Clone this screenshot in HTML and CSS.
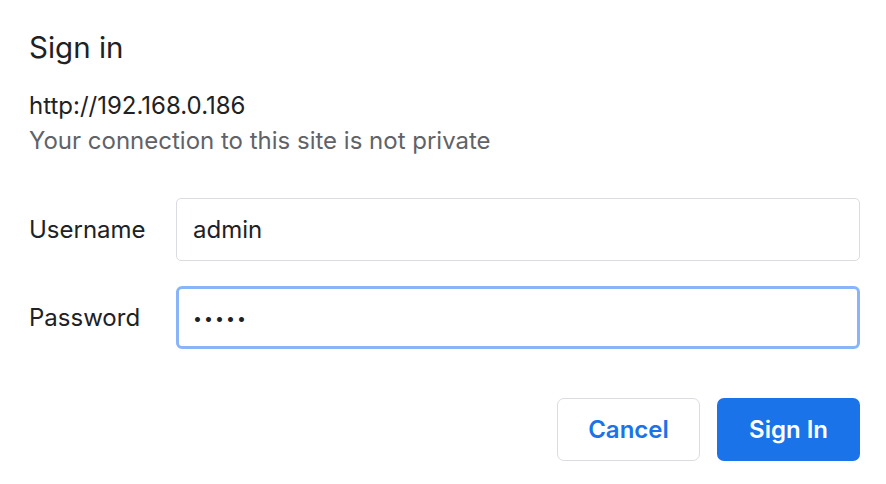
FILE: index.html
```html
<!DOCTYPE html>
<html lang="en">
<head>
  <meta charset="UTF-8">
  <title>Sign in</title>
  <link rel="stylesheet" href="styles.css">
</head>
<body>
  <div class="dialog">
    <h1>Sign in</h1>
    <p class="origin">http://192.168.0.186</p>
    <p class="note">Your connection to this site is not private</p>
    <form class="fields" action="">
      <label for="username">Username</label>
      <input type="text" id="username" value="admin">
      <label for="password">Password</label>
      <input type="password" id="password" class="focused" value="admin">
    </form>
    <div class="actions">
      <button class="btn cancel">Cancel</button>
      <button class="btn primary">Sign In</button>
    </div>
  </div>
</body>
</html>
```

FILE: styles.css
```css
* {
  margin: 0;
  padding: 0;
  box-sizing: border-box;
}
body {
  background: #fff;
  font-family: Inter, "Noto Sans", sans-serif;
  color: #202124;
}
.dialog {
  padding: 29px 26px 0 29px;
}
h1 {
  font-size: 29.5px;
  font-weight: 400;
  line-height: 36px;
}
.origin {
  margin-top: 25px;
  font-size: 24px;
  line-height: 32px;
}
.note {
  margin-top: 3px;
  font-size: 24px;
  line-height: 32px;
  color: #5f6368;
}
.fields {
  display: grid;
  grid-template-columns: 147px 1fr;
  row-gap: 25px;
  align-items: center;
  margin-top: 41px;
}
.fields label {
  font-size: 24px;
}
.fields input {
  height: 63px;
  border: 1px solid #dadce0;
  border-radius: 5px;
  padding: 0 16px;
  font-family: inherit;
  font-size: 24px;
  color: #202124;
  outline: none;
}
.fields input.focused {
  border: 3px solid #8ab4f8;
  padding: 0 14px;
  border-radius: 6px;
  font-size: 16px;
  letter-spacing: 2px;
}
.actions {
  display: flex;
  justify-content: flex-end;
  gap: 17px;
  margin-top: 49px;
}
.btn {
  width: 143px;
  height: 63px;
  border-radius: 7px;
  font-family: inherit;
  font-size: 24px;
  font-weight: 600;
  cursor: pointer;
}
.cancel {
  background: #fff;
  color: #1a73e8;
  border: 1px solid #dadce0;
}
.primary {
  background: #1a73e8;
  color: #fff;
  border: none;
}
```
